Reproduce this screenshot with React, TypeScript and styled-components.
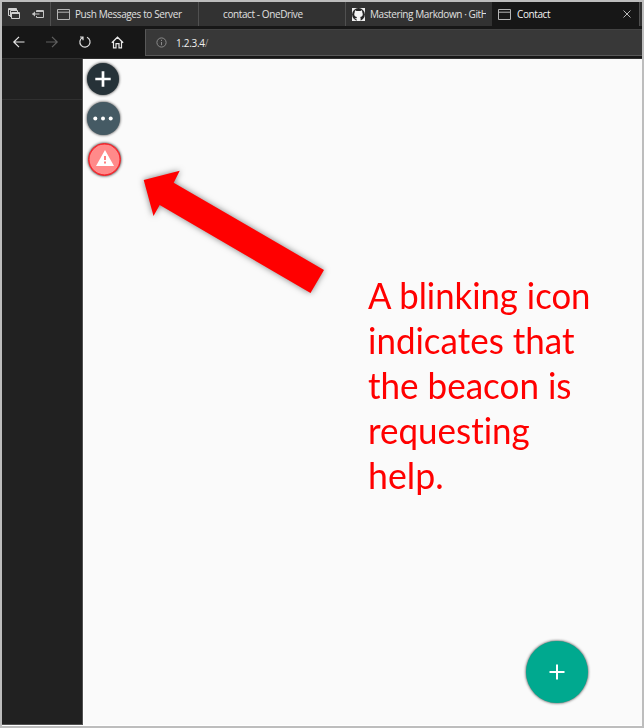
import React from "react";
import styled, { createGlobalStyle } from "styled-components";

const Global = createGlobalStyle`
  * { box-sizing: border-box; }
  body { margin: 0; background: #bdbdbd; }
  svg { display: block; flex: none; }
`;

const Frame = styled.div`
  width: 644px;
  height: 728px;
  border: 2px solid #bdbdbd;
  background: #fafafa;
  display: flex;
  flex-direction: column;
  overflow: hidden;
  font-family: "Open Sans", "Noto Sans", sans-serif;
`;

const TabBar = styled.div`
  height: 24px;
  flex: none;
  display: flex;
  background: #323232;
`;

const TabTools = styled.div`
  width: 48px;
  display: flex;
  align-items: center;
  gap: 12px;
  padding-left: 6px;
`;

const Tab = styled.div<{ $w: number; $active?: boolean }>`
  width: ${(p) => p.$w}px;
  height: 24px;
  flex: none;
  display: flex;
  align-items: center;
  border-left: 1px solid ${(p) => (p.$active ? "#171717" : "#505050")};
  padding-left: ${(p) => (p.$active ? 5 : 6)}px;
  padding-right: ${(p) => (p.$active ? 8 : 6)}px;
  background: ${(p) => (p.$active ? "#171717" : "#323232")};
`;

const TabTitle = styled.span<{ $gap: number; $bright?: boolean }>`
  margin-left: ${(p) => p.$gap}px;
  flex: 1;
  white-space: nowrap;
  overflow: hidden;
  font-size: 10px;
  line-height: 16px;
  letter-spacing: -0.4px;
  color: ${(p) => (p.$bright ? "#f4f4f4" : "#e0e0e0")};
`;

const TabEnd = styled.div`
  flex: 1;
  border-left: 1px solid #505050;
`;

const Toolbar = styled.div`
  height: 33px;
  flex: none;
  display: flex;
  background: #171717;
  border-bottom: 1px solid #303030;
`;

const NavButtons = styled.div`
  width: 143px;
  display: flex;
  gap: 19px;
  align-items: center;
  padding: 0 0 0 9.5px;
`;

const AddressField = styled.div`
  margin-top: 3px;
  height: 27px;
  flex: 1;
  display: flex;
  align-items: center;
  gap: 9px;
  padding-left: 10px;
  background: #383838;
  border: 1px solid #585858;
  border-top-color: #434343;
  border-right: none;
`;

const Url = styled.span`
  font-size: 10px;
  line-height: 16px;
  letter-spacing: -0.3px;
  color: #f0f0f0;
`;

const UrlPath = styled.span`
  color: #999999;
`;

const Body = styled.div`
  flex: 1;
  min-height: 0;
  display: flex;
  border-bottom: 1px solid #ffffff;
`;

const Sidebar = styled.aside`
  width: 81px;
  background: #212121;
  border-right: 1px solid #515151;
  border-bottom: 1px solid #515151;
`;

const SidebarHeader = styled.div`
  height: 41px;
  border-bottom: 1px solid #303030;
`;

const Content = styled.main`
  flex: 1;
  position: relative;
  background: #fafafa;
  border-left: 1px solid #ffffff;
`;

const Marker = styled.div<{ $x: number; $y: number; $size: number; $color: string; $ring?: string }>`
  position: absolute;
  left: ${(p) => p.$x}px;
  top: ${(p) => p.$y}px;
  width: ${(p) => p.$size}px;
  height: ${(p) => p.$size}px;
  border-radius: 50%;
  display: flex;
  align-items: center;
  justify-content: center;
  background: ${(p) => p.$color};
  border: ${(p) => (p.$ring ? `1px solid ${p.$ring}` : "none")};
  box-shadow: ${(p) => (p.$ring ? `inset 0 0 0 0.5px ${p.$ring}, ` : "")}0 0 3px rgba(0, 0, 0, 0.85);
`;

const ArrowSvg = styled.svg`
  position: absolute;
  left: 46px;
  top: 101px;
  overflow: visible;
  filter: drop-shadow(0 0 3px rgba(0, 0, 0, 0.5));
`;

const Callout = styled.div`
  position: absolute;
  left: 283.5px;
  top: 213px;
  color: #ff0000;
  font-family: Lato, "Open Sans", sans-serif;
  font-size: 37px;
  font-variant-ligatures: none;
  line-height: 45px;
  white-space: nowrap;
`;

const CalloutLine = styled.div<{ $scale: number }>`
  width: max-content;
  transform: scaleX(${(p) => p.$scale});
  transform-origin: 0 0;
`;

const PageIcon = () => (
  <svg width="13" height="11" viewBox="0 0 13 11" fill="none" stroke="#b5b5b5">
    <path d="M.5.5h12v10H.5zM.5 3.2h12" />
  </svg>
);

const callout: [string, number][] = [
  ["A blinking icon", 0.938],
  ["indicates that", 0.945],
  ["the beacon is", 0.947],
  ["requesting", 0.945],
  ["help.", 0.965],
];

export default function App() {
  return (
    <>
      <Global />
      <Frame>
        <TabBar>
          <TabTools>
            <svg width="12" height="12" viewBox="0 0 12 12" fill="none" stroke="#d0d0d0">
              <path d="M2.5 7.5h-2v-7h8v2M.5 1.5h8M3.5 10.5v-6h8v6zM3.5 5.5h8" />
              <path d="M2.5 9V2.5h7v2" />
            </svg>
            <svg width="13" height="10" viewBox="0 0 13 10" fill="none" stroke="#c4c4c4">
              <path d="M4.5 3V1.5h7v7h-7V7M4.5 2.5h7M.5 5h7" />
              <path fill="#c4c4c4" stroke="none" d="M0 5l3-2.500v5z" />
            </svg>
          </TabTools>
          <Tab $w={148}>
            <PageIcon />
            <TabTitle $gap={5}>Push Messages to Server</TabTitle>
          </Tab>
          <Tab $w={147}>
            <TabTitle $gap={18}>contact - OneDrive</TabTitle>
          </Tab>
          <Tab $w={147}>
            <svg width="13" height="13" viewBox="0 0 13 13">
              <path fill="#eeeeee" d="M0 0h13v13H0z" />
              <circle cx="6.5" cy="6.5" r="6.4" fill="#252525" />
              <path
                fill="#f5f5f5"
                d="M3 2.2l1.7.9q1.8-.4 3.6 0L10 2.2l.3 2.1q1.6 4-2.1 4.8l.4 1v2.9H4.7v-1.5L2.5 10l2.2.2.1-1.1Q1.100 8.300 2.700 4.300z"
              />
            </svg>
            <TabTitle $gap={5}>Mastering Markdown · GitH</TabTitle>
          </Tab>
          <Tab $w={147} $active>
            <PageIcon />
            <TabTitle $gap={6} $bright>Contact</TabTitle>
            <svg width="8" height="8" viewBox="0 0 8 8" stroke="#b8b8b8">
              <path d="M.5.5l7 7M7.500.5l-7 7" />
            </svg>
          </Tab>
          <TabEnd />
        </TabBar>
        <Toolbar>
          <NavButtons>
            <svg width="14" height="12" viewBox="0 0 14 12" fill="none" stroke="#e8e8e8" strokeWidth="1.2">
              <path d="M12.500 6H2M7 .8L1.800 6 7 11.200" />
            </svg>
            <svg width="14" height="12" viewBox="0 0 14 12" fill="none" stroke="#606060" strokeWidth="1.2">
              <path d="M1 6h10.500M7 .8L12.200 6 7 11.200" />
            </svg>
            <svg width="14" height="14" viewBox="0 0 14 14" fill="none" stroke="#dedede" strokeWidth="1.200">
              <path d="M9 2.300a5.100 5.100 0 1 1-4.500.2M2 2h3v3.300" />
            </svg>
            <svg width="13" height="13" viewBox="0 0 13 13" fill="none" stroke="#e8e8e8" strokeWidth="1.200">
              <path d="M.8 6.700L6.500 1.200l5.700 5.500M2.500 5.500v6.400H5V7.600h3v4.300h2.500V5.500" />
            </svg>
          </NavButtons>
          <AddressField>
            <svg width="11" height="11" viewBox="0 0 11 11" fill="none" stroke="#8b8b8b">
              <circle cx="5.500" cy="5.500" r="4.600" />
              <path d="M5.500 5v3.200M5.500 2.800v1.200" />
            </svg>
            <Url>
              1.2.3.4<UrlPath>/</UrlPath>
            </Url>
          </AddressField>
        </Toolbar>
        <Body>
          <Sidebar>
            <SidebarHeader />
          </Sidebar>
          <Content>
            <Marker $x={2.500} $y={4} $size={32} $color="#263238">
              <svg width="16" height="16" viewBox="0 0 16 16" stroke="#fff" strokeWidth="2.700">
                <path d="M8 .3v15.400M.3 8h15.400" />
              </svg>
            </Marker>
            <Marker $x={3} $y={43} $size={32.500} $color="#455a64">
              <svg width="20" height="6" viewBox="0 0 20 6" fill="#fff">
                <circle cx="2.300" cy="3.500" r="2" />
                <circle cx="10" cy="3.500" r="2" />
                <circle cx="17.700" cy="3.500" r="2" />
              </svg>
            </Marker>
            <Marker $x={4} $y={83.500} $size={33} $color="#ff8a8a" $ring="#f51d25">
              <svg width="18" height="18" viewBox="0 0 18 18">
                <path fill="#fff" d="M9 0l9 16H0z" />
                <path fill="#ff8080" d="M8 6h2v4H8zM8 11.500h2v2H8z" />
              </svg>
            </Marker>
            <ArrowSvg width="200" height="140" viewBox="130 160 200 140">
              <path fill="#ff0000" d="M143.700 180L179.700 170.800 173.700 182.700 324 270 310.500 293 159.700 205 153.500 216z" />
            </ArrowSvg>
            <Callout>
              {callout.map(([text, scale]) => (
                <CalloutLine key={text} $scale={scale}>
                  {text}
                </CalloutLine>
              ))}
            </Callout>
            <Marker $x={441.500} $y={581.500} $size={62} $color="#00a98f">
              <svg width="16" height="16" viewBox="0 0 16 16" stroke="#fff" strokeWidth="2">
                <path d="M8 .5v15M.5 8h15" />
              </svg>
            </Marker>
          </Content>
        </Body>
      </Frame>
    </>
  );
}
